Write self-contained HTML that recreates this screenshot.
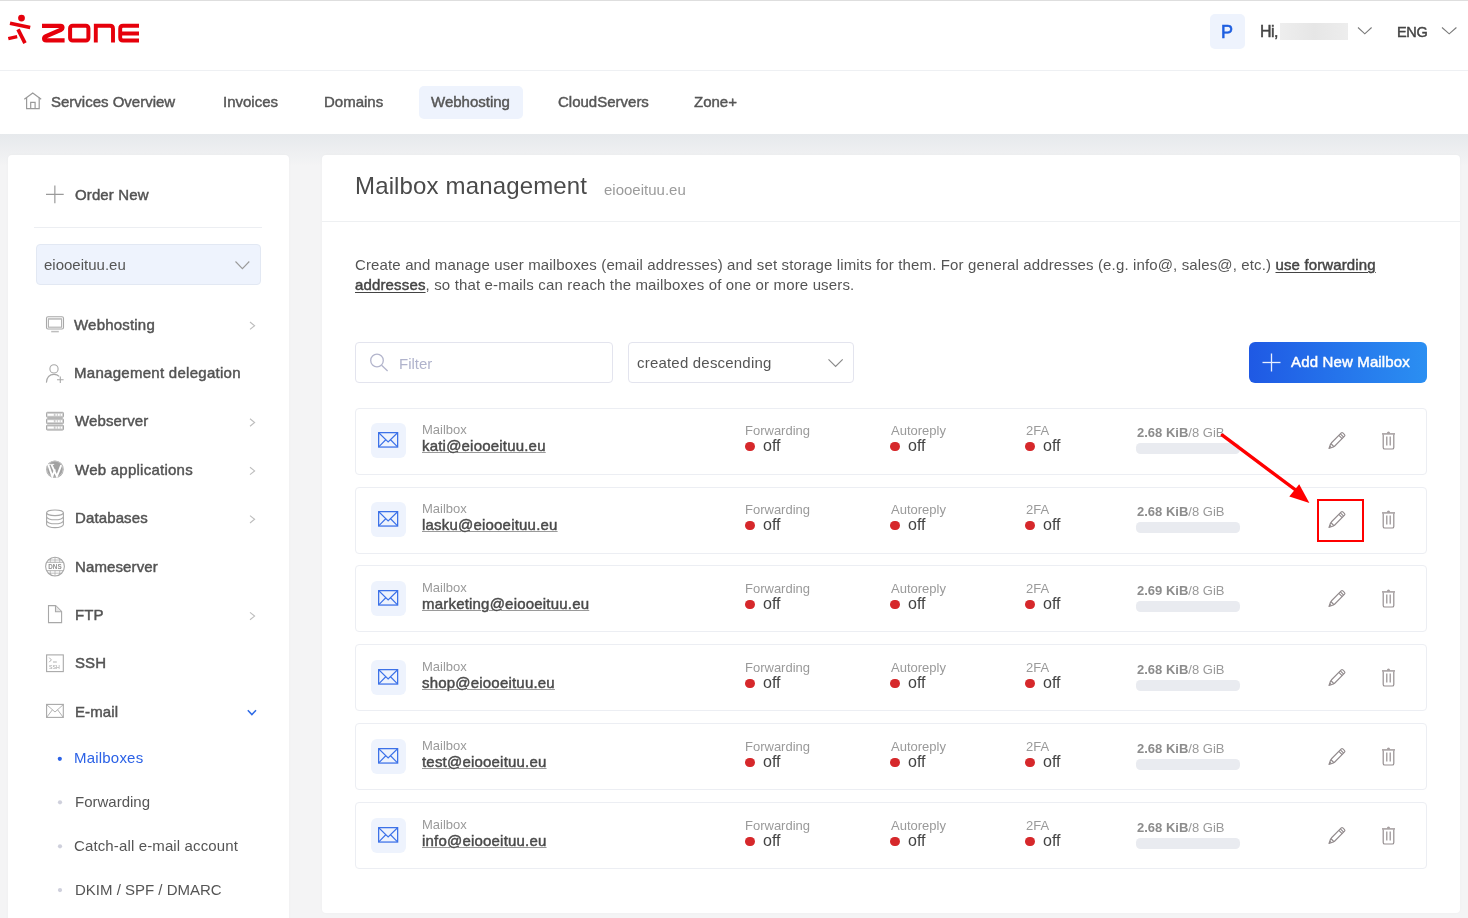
<!DOCTYPE html>
<html><head><meta charset="utf-8">
<style>
*{box-sizing:border-box;margin:0;padding:0}
html,body{width:1468px;height:918px;overflow:hidden}
body{position:relative;background:#f4f4f5;font-family:"Liberation Sans",sans-serif;color:#4a4a4a}
.a{position:absolute}
.t{position:absolute;white-space:nowrap;line-height:1;will-change:transform}
.m{-webkit-text-stroke:0.45px currentColor}
svg{position:absolute;overflow:visible}
#topline{left:0;top:0;width:1468px;height:1px;background:#dedede}
#header{left:0;top:1px;width:1468px;height:69px;background:#fff}
#hline{left:0;top:70px;width:1468px;height:1px;background:#eef0f3}
#nav{left:0;top:71px;width:1468px;height:63px;background:#fff}
#shadow{left:0;top:134px;width:1468px;height:32px;background:linear-gradient(#e6e9ec,#f4f4f5)}
#side{left:8px;top:155px;width:281px;height:800px;background:#fff;border-radius:4px;box-shadow:0 0 3px rgba(0,0,0,0.03)}
#main{left:322px;top:155px;width:1138px;height:758px;background:#fff;border-radius:4px;box-shadow:0 0 3px rgba(0,0,0,0.03)}
.nav{font-size:15px;color:#565656}
.side{font-size:15px;color:#535353;letter-spacing:0.12px}
.sub{font-size:15px;color:#555}
.row{position:absolute;left:355px;width:1072px;height:67px;border:1px solid #eceef3;border-radius:4px;background:#fff}
.in{position:absolute;left:0;width:100%;height:100%}
.ibox{position:absolute;left:15px;top:15px;width:35px;height:35px;border-radius:6px;background:#eef3fd}
.lbl{font-size:13px;color:#9a9a9a}
.em{font-size:15px;color:#4a4a4a;letter-spacing:0.2px;text-decoration:underline;text-decoration-color:#9a9a9a;text-decoration-thickness:1.3px;text-underline-offset:1.2px}
.off{font-size:16px;color:#444}
.dot{position:absolute;width:9.5px;height:9.5px;border-radius:50%;background:#d6282b}
.bar{position:absolute;left:780px;top:35px;width:104px;height:12px;border-radius:4.5px;background:#e9ebf0}
.st{font-size:13px;color:#999}
.st b{color:#8c8c8c}
</style></head>
<body>
<div id="topline" class="a"></div>
<div id="header" class="a"></div>
<div id="hline" class="a"></div>
<div id="nav" class="a"></div>
<div id="shadow" class="a"></div>
<div id="side" class="a"></div>
<div id="main" class="a"></div>

<!-- LOGO -->
<svg width="150" height="60" style="left:0;top:0" viewBox="0 0 150 60">
 <g fill="#e6000b"><circle cx="21.5" cy="18.1" r="3.4"/></g>
 <g stroke="#e6000b" fill="none">
  <line x1="10" y1="23.3" x2="30.2" y2="27.4" stroke-width="3.6"/>
  <line x1="18" y1="29.3" x2="25" y2="43.2" stroke-width="3.7"/>
  <line x1="8.3" y1="38.6" x2="17.2" y2="36.6" stroke-width="3.4"/>
  <path d="M42,25.85 L60.5,25.85 Q62.4,25.85 62.4,27.8 Q62.4,29.2 61,29.8 L46,36.2 Q44.2,37 44.2,38.5 Q44.2,40.4 46.2,40.4 L64.6,40.4" stroke-width="4.4"/>
  <rect x="70.1" y="25.7" width="18.3" height="14.8" rx="2.5" stroke-width="4"/>
  <path d="M95.8,42.5 V25.7 H110 Q113,25.7 113,28.7 V42.5" stroke-width="3.9"/>
  <path d="M139,25.7 H123 Q120.2,25.7 120.2,28.7 V37.5 Q120.2,40.5 123,40.5 H139 M120.2,33.55 H139" stroke-width="3.9"/>
 </g>
</svg>

<!-- HEADER RIGHT -->
<div class="a" style="left:1210px;top:14px;width:35px;height:35px;border-radius:5px;background:#eef3fd"></div>
<div class="t" style="left:1221px;top:23.3px;font-size:18px;color:#1f5fe0;-webkit-text-stroke:0.6px #1f5fe0">P</div>
<div class="t m" style="left:1260px;top:24.4px;font-size:16px;color:#444;letter-spacing:-0.6px">Hi,</div>
<div class="a" style="left:1280px;top:23px;width:68px;height:17px;background:linear-gradient(90deg,#eeeeee,#e6e6e6 50%,#ededed);filter:blur(0.7px)"></div>
<svg width="20" height="10" style="left:0;top:0"><polyline points="1358,27.5 1364.8,33.8 1371.6,27.5" fill="none" stroke="#7a7a7a" stroke-width="1.1"/></svg>
<div class="t m" style="left:1397px;top:24.5px;font-size:14.5px;color:#444;letter-spacing:-0.3px">ENG</div>
<svg width="20" height="10" style="left:0;top:0"><polyline points="1442,27.5 1449.2,33.8 1456.4,27.5" fill="none" stroke="#7a7a7a" stroke-width="1.1"/></svg>

<!-- NAV -->
<svg width="20" height="20" style="left:0;top:0"><g fill="none" stroke="#9a9a9a" stroke-width="1.2"><path d="M24.3,99.3 L32.75,92.9 L41.2,99.3"/><path d="M26.6,97.6 V108.7 H39.2 V97.6"/><path d="M30.7,108.7 V102.4 H35.1 V108.7"/></g></svg>
<div class="a" style="left:419px;top:86px;width:104px;height:33px;border-radius:5px;background:#eef3fd"></div>
<div class="t nav m" style="left:51px;top:94px">Services Overview</div>
<div class="t nav m" style="left:222.5px;top:94px">Invoices</div>
<div class="t nav m" style="left:324.4px;top:94px">Domains</div>
<div class="t nav m" style="left:430.7px;top:94px">Webhosting</div>
<div class="t nav m" style="left:557.6px;top:94px">CloudServers</div>
<div class="t nav m" style="left:694.2px;top:94px">Zone+</div>


<!-- SIDEBAR -->
<svg width="300" height="918" style="left:0;top:0" viewBox="0 0 300 918">
 <g fill="none" stroke="#9a9a9a" stroke-width="1.2">
  <path d="M46,194.4 H63.7 M54.85,185.6 V203.2"/>
 </g>
 <line x1="34" y1="227.5" x2="262" y2="227.5" stroke="#eceef2" stroke-width="1"/>
 <g fill="none" stroke="#a8a8a8" stroke-width="1.1">
  <!-- monitor -->
  <rect x="46.5" y="316.8" width="17" height="12.2" rx="1.5"/>
  <rect x="48.4" y="318.9" width="13.2" height="8.3" fill="#fff" stroke="#b0b0b0"/><line x1="48.4" y1="318.9" x2="61.6" y2="318.9" stroke="#c4c4c4" stroke-width="1.4"/>
  <line x1="51.2" y1="331.6" x2="58.8" y2="331.6" stroke="#bdbdbd" stroke-width="1.5"/>
  <!-- user plus -->
  <circle cx="54" cy="368.9" r="4.1"/>
  <path d="M46.4,382.6 C46.8,377 50,374.4 54,374.4 C56.2,374.4 58,375.2 59.2,376.4"/>
  <path d="M57,379.8 H63.6 M60.3,376.6 V383"/>
  <!-- server -->
 </g>
 <g>
  <rect x="46.5" y="412.3" width="17" height="5" rx="0.9" fill="#cbcbcb" stroke="#a9a9a9" stroke-width="1"/>
  <rect x="47.5" y="413.8" width="6.3" height="2" fill="#fff"/>
  <rect x="55.5" y="413.8" width="1.3" height="2" fill="#fff"/>
  <rect x="57.8" y="413.8" width="1.9" height="2" fill="#fff"/>
  <rect x="60.7" y="413.8" width="1.5" height="2" fill="#fff"/>
  <rect x="46.5" y="418.7" width="17" height="5" rx="0.9" fill="#cbcbcb" stroke="#a9a9a9" stroke-width="1"/>
  <rect x="47.5" y="420.2" width="6.3" height="2" fill="#fff"/>
  <rect x="55.5" y="420.2" width="1.3" height="2" fill="#fff"/>
  <rect x="57.8" y="420.2" width="1.9" height="2" fill="#fff"/>
  <rect x="60.7" y="420.2" width="1.5" height="2" fill="#fff"/>
  <rect x="46.5" y="425.1" width="17" height="5" rx="0.9" fill="#cbcbcb" stroke="#a9a9a9" stroke-width="1"/>
  <rect x="47.5" y="426.6" width="6.3" height="2" fill="#fff"/>
  <rect x="55.5" y="426.6" width="1.3" height="2" fill="#fff"/>
  <rect x="57.8" y="426.6" width="1.9" height="2" fill="#fff"/>
  <rect x="60.7" y="426.6" width="1.5" height="2" fill="#fff"/>
 </g>
 <!-- wordpress -->
 <circle cx="54.9" cy="469.2" r="8.8" fill="#a2a2a2"/>
 <circle cx="54.9" cy="469.2" r="8.1" fill="none" stroke="#d8d8d8" stroke-width="0.6"/>
 <path d="M48.3,464.8 L52.3,476.4 L55,469.4 M51.6,464.8 L56.9,476.4 L61.2,465.2" stroke="#fff" stroke-width="1.9" fill="none"/>
 <path d="M47,464.4 H50.6 M50.4,464.4 H54.2" stroke="#fff" stroke-width="0.9"/>
 <g fill="none" stroke="#a8a8a8" stroke-width="1.1">
  <!-- database -->
  <g transform="translate(0,0.6)"><ellipse cx="55" cy="512.2" rx="8.4" ry="2.8"/>
  <path d="M46.6,512.2 V524 C46.6,525.6 50.4,527 55,527 C59.6,527 63.4,525.6 63.4,524 V512.2"/>
  <path d="M46.6,516.2 C46.6,517.8 50.4,519.2 55,519.2 C59.6,519.2 63.4,517.8 63.4,516.2"/>
  <path d="M46.6,520.2 C46.6,521.8 50.4,523.2 55,523.2 C59.6,523.2 63.4,521.8 63.4,520.2"/></g>
  <!-- dns -->
  <circle cx="55" cy="566.6" r="9.4"/>
  <path d="M46.3,562.3 H63.7 M46.3,570.7 H63.7" stroke-width="0.9"/>
  <path d="M55,557.2 V562.3 M51.2,558 Q49.8,560 50.3,562.3 M58.8,558 Q60.2,560 59.7,562.3 M48.2,560 H61.8 M55,570.7 V576 M51.2,575.2 Q49.8,573 50.3,570.7 M58.8,575.2 Q60.2,573 59.7,570.7 M48.2,573.2 H61.8" stroke-width="0.7"/>
  <!-- file -->
  <path d="M48.5,605.6 H55.6 L61.6,611.6 V622.6 H48.5 Z"/>
  <path d="M55.5,605.8 V611.7 H61.4" fill="#e6e6e6"/>
  <!-- ssh -->
  <rect x="46.6" y="654.9" width="16.7" height="16.7"/>
  <path d="M49.2,657.6 L51.4,659.9 L49.2,662.2 M53,662 H56.8" stroke-width="0.9"/>
  <!-- mail -->
  <rect x="46.6" y="704.4" width="16.7" height="13"/>
  <path d="M46.6,704.6 L55,712 L63.3,704.6 M46.6,717.4 L52.4,709.8 M63.3,717.4 L57.6,709.8" stroke-width="0.9"/>
 </g>
 <text x="48.3" y="569.1" font-family="Liberation Sans" font-weight="bold" font-size="6.6" fill="#8e8e8e" textLength="13.3" lengthAdjust="spacingAndGlyphs">DNS</text>
 <text x="49.1" y="669.4" font-family="Liberation Sans" font-size="5.8" fill="#a0a0a0" textLength="10.7" lengthAdjust="spacingAndGlyphs">SSH</text>
 <g fill="none" stroke="#bdbdbd" stroke-width="1.1">
  <polyline points="250,322 254.6,325.7 250,329.4"/>
  <polyline points="250,418.8 254.6,422.5 250,426.2"/>
  <polyline points="250,467.2 254.6,470.9 250,474.6"/>
  <polyline points="250,515.6 254.6,519.3 250,523"/>
  <polyline points="250,612.4 254.6,616.1 250,619.8"/>
 </g>
 <polyline points="247.8,710.2 251.9,714.6 256,710.2" fill="none" stroke="#2f6be6" stroke-width="1.5"/>
 <circle cx="59.8" cy="758.8" r="2.1" fill="#2c62e6"/>
 <circle cx="60" cy="802.3" r="2.1" fill="#cfd0dc"/>
 <circle cx="60" cy="846.3" r="2.1" fill="#cfd0dc"/>
 <circle cx="60" cy="890.1" r="2.1" fill="#cfd0dc"/>
</svg>
<div class="a" style="left:36px;top:244px;width:225px;height:41px;border-radius:4px;background:#eef3fd;border:1px solid #e2e8f3"></div>
<svg width="20" height="10" style="left:0;top:0"><polyline points="235.5,261.5 242.4,268.6 249.3,261.5" fill="none" stroke="#9a9a9a" stroke-width="1.1"/></svg>
<div class="t side m" style="left:74.6px;top:187px">Order New</div>
<div class="t" style="left:43.8px;top:257px;font-size:15px;color:#555">eiooeituu.eu</div>
<div class="t side m" style="left:74px;top:316.8px;letter-spacing:0.2px">Webhosting</div>
<div class="t side m" style="left:74px;top:365.3px;letter-spacing:0.28px">Management delegation</div>
<div class="t side m" style="left:74.5px;top:412.9px">Webserver</div>
<div class="t side m" style="left:74.5px;top:461.9px;letter-spacing:0.25px">Web applications</div>
<div class="t side m" style="left:74.5px;top:510.3px">Databases</div>
<div class="t side m" style="left:74.5px;top:558.7px">Nameserver</div>
<div class="t side m" style="left:74.5px;top:607.1px">FTP</div>
<div class="t side m" style="left:74.5px;top:654.6px">SSH</div>
<div class="t side m" style="left:74.5px;top:704.3px">E-mail</div>
<div class="t sub" style="left:74.3px;top:749.9px;color:#2c62e6;letter-spacing:0.2px">Mailboxes</div>
<div class="t sub" style="left:74.5px;top:793.9px">Forwarding</div>
<div class="t sub" style="left:74px;top:838.1px;letter-spacing:0.13px">Catch-all e-mail account</div>
<div class="t sub" style="left:74.5px;top:882px">DKIM / SPF / DMARC</div>


<!-- MAIN -->
<div class="a" style="left:322px;top:221px;width:1138px;height:1px;background:#eef0f2"></div>
<div class="t" style="left:354.5px;top:174.1px;font-size:24px;color:#4a4a4a;letter-spacing:0.15px">Mailbox management</div>
<div class="t" style="left:603.9px;top:181.7px;font-size:15px;color:#9b9b9b">eiooeituu.eu</div>
<div class="t" style="left:355px;top:256.8px;font-size:15px;color:#555;letter-spacing:0.135px">Create and manage user mailboxes (email addresses) and set storage limits for them. For general addresses (e.g. info@, sales@, etc.) <span class="m" style="text-decoration:underline;text-decoration-thickness:1px;text-underline-offset:2px;color:#444">use forwarding</span></div>
<div class="t" style="left:355px;top:277.3px;font-size:15px;color:#555;letter-spacing:0.15px"><span class="m" style="text-decoration:underline;text-decoration-thickness:1px;text-underline-offset:2px;color:#444">addresses</span>, so that e-mails can reach the mailboxes of one or more users.</div>

<div class="a" style="left:355px;top:342px;width:258px;height:41px;border:1px solid #e3e4ee;border-radius:4px;background:#fff"></div>
<svg width="20" height="20" style="left:0;top:0"><g fill="none" stroke="#b3b5cc" stroke-width="1.3"><circle cx="377" cy="360.5" r="6.3"/><line x1="381.6" y1="365.2" x2="387.6" y2="371"/></g></svg>
<div class="t" style="left:399.4px;top:355.7px;font-size:15px;color:#b0b3cc">Filter</div>

<div class="a" style="left:628px;top:342px;width:226px;height:41px;border:1px solid #e3e4ee;border-radius:4px;background:#fff"></div>
<div class="t" style="left:636.5px;top:355.3px;font-size:15px;color:#555;letter-spacing:0.2px">created descending</div>
<svg width="20" height="10" style="left:0;top:0"><polyline points="828.5,359.4 835.6,366.4 842.7,359.4" fill="none" stroke="#8a8a8a" stroke-width="1.2"/></svg>

<div class="a" style="left:1249px;top:342px;width:178px;height:41px;border-radius:6px;background:linear-gradient(90deg,#1f59e4,#2b8ff2)"></div>
<svg width="20" height="20" style="left:0;top:0"><g fill="none" stroke="#e8f0ff" stroke-width="1.3"><line x1="1262.5" y1="362.5" x2="1280.5" y2="362.5"/><line x1="1271.5" y1="353.5" x2="1271.5" y2="371.5"/></g></svg>
<div class="t m" style="left:1290.5px;top:353.6px;font-size:15px;color:#fff;letter-spacing:0.15px">Add New Mailbox</div>
<div class="row" style="top:408px"><div class="in" style="top:-1px">
 <div class="ibox"></div>
 <svg width="21" height="16" style="left:22.3px;top:24px"><g fill="none" stroke="#3a70e8" stroke-width="1.25"><rect x="0.65" y="0.65" width="19" height="14.4"/><path d="M1,1 L10.15,10 L19.3,1 M1,14.7 L7.5,8 M19.3,14.7 L12.8,8" stroke-width="1.1"/></g></svg>
 <div class="t lbl" style="left:65.5px;top:14.8px">Mailbox</div>
 <div class="t em m" style="left:65.5px;top:30.3px">kati@eiooeituu.eu</div>
 <div class="t lbl" style="left:389px;top:15.7px">Forwarding</div>
 <div class="dot" style="left:389px;top:33.9px"></div>
 <div class="t off" style="left:406.8px;top:30.2px">off</div>
 <div class="t lbl" style="left:534.6px;top:15.7px">Autoreply</div>
 <div class="dot" style="left:534.2px;top:33.9px"></div>
 <div class="t off" style="left:552.2px;top:30.2px">off</div>
 <div class="t lbl" style="left:669.6px;top:15.7px">2FA</div>
 <div class="dot" style="left:669px;top:33.9px"></div>
 <div class="t off" style="left:687px;top:30.2px">off</div>
 <div class="t st" style="left:780.5px;top:17.7px"><b>2.68 KiB</b>/8 GiB</div>
 <div class="bar" style="left:780px;top:34.9px;width:104px;height:11.6px"></div>
 <svg width="19" height="19" style="left:972px;top:22.6px"><g transform="translate(1,17.5) rotate(-45)" fill="none" stroke="#928b8d" stroke-width="1.15" stroke-linejoin="round"><path d="M4.77,-2.3 L0,0 L4.77,2.3"/><rect x="4.77" y="-2.3" width="16" height="4.6" rx="1.1"/><path d="M16.3,-2.3 V2.3 M18.4,-2.3 V2.3 M2.2,-1 V1" /></g></svg>
 <svg width="13" height="19" style="left:1026px;top:22.9px"><path d="M4.9,2.4 Q4.9,0.6 6.5,0.6 Q8.1,0.6 8.1,2.4 Z" fill="#a39c9e"/><path d="M0,2.9 H13" stroke="#a39c9e" stroke-width="1.5"/><path d="M1.2,3.6 V16.4 Q1.2,18 2.8,18 H10.2 Q11.8,18 11.8,16.4 V3.6 M4.8,5.5 V14.5 M8.2,5.5 V14.5" fill="none" stroke="#958e90" stroke-width="1.2"/></svg>
</div></div>
<div class="row" style="top:487px"><div class="in" style="top:-1px">
 <div class="ibox"></div>
 <svg width="21" height="16" style="left:22.3px;top:24px"><g fill="none" stroke="#3a70e8" stroke-width="1.25"><rect x="0.65" y="0.65" width="19" height="14.4"/><path d="M1,1 L10.15,10 L19.3,1 M1,14.7 L7.5,8 M19.3,14.7 L12.8,8" stroke-width="1.1"/></g></svg>
 <div class="t lbl" style="left:65.5px;top:14.8px">Mailbox</div>
 <div class="t em m" style="left:65.5px;top:30.3px">lasku@eiooeituu.eu</div>
 <div class="t lbl" style="left:389px;top:15.7px">Forwarding</div>
 <div class="dot" style="left:389px;top:33.9px"></div>
 <div class="t off" style="left:406.8px;top:30.2px">off</div>
 <div class="t lbl" style="left:534.6px;top:15.7px">Autoreply</div>
 <div class="dot" style="left:534.2px;top:33.9px"></div>
 <div class="t off" style="left:552.2px;top:30.2px">off</div>
 <div class="t lbl" style="left:669.6px;top:15.7px">2FA</div>
 <div class="dot" style="left:669px;top:33.9px"></div>
 <div class="t off" style="left:687px;top:30.2px">off</div>
 <div class="t st" style="left:780.5px;top:17.7px"><b>2.68 KiB</b>/8 GiB</div>
 <div class="bar" style="left:780px;top:34.9px;width:104px;height:11.6px"></div>
 <svg width="19" height="19" style="left:972px;top:22.6px"><g transform="translate(1,17.5) rotate(-45)" fill="none" stroke="#928b8d" stroke-width="1.15" stroke-linejoin="round"><path d="M4.77,-2.3 L0,0 L4.77,2.3"/><rect x="4.77" y="-2.3" width="16" height="4.6" rx="1.1"/><path d="M16.3,-2.3 V2.3 M18.4,-2.3 V2.3 M2.2,-1 V1" /></g></svg>
 <svg width="13" height="19" style="left:1026px;top:22.9px"><path d="M4.9,2.4 Q4.9,0.6 6.5,0.6 Q8.1,0.6 8.1,2.4 Z" fill="#a39c9e"/><path d="M0,2.9 H13" stroke="#a39c9e" stroke-width="1.5"/><path d="M1.2,3.6 V16.4 Q1.2,18 2.8,18 H10.2 Q11.8,18 11.8,16.4 V3.6 M4.8,5.5 V14.5 M8.2,5.5 V14.5" fill="none" stroke="#958e90" stroke-width="1.2"/></svg>
</div></div>
<div class="row" style="top:565px"><div class="in" style="top:0px">
 <div class="ibox"></div>
 <svg width="21" height="16" style="left:22.3px;top:24px"><g fill="none" stroke="#3a70e8" stroke-width="1.25"><rect x="0.65" y="0.65" width="19" height="14.4"/><path d="M1,1 L10.15,10 L19.3,1 M1,14.7 L7.5,8 M19.3,14.7 L12.8,8" stroke-width="1.1"/></g></svg>
 <div class="t lbl" style="left:65.5px;top:14.8px">Mailbox</div>
 <div class="t em m" style="left:65.5px;top:30.3px">marketing@eiooeituu.eu</div>
 <div class="t lbl" style="left:389px;top:15.7px">Forwarding</div>
 <div class="dot" style="left:389px;top:33.9px"></div>
 <div class="t off" style="left:406.8px;top:30.2px">off</div>
 <div class="t lbl" style="left:534.6px;top:15.7px">Autoreply</div>
 <div class="dot" style="left:534.2px;top:33.9px"></div>
 <div class="t off" style="left:552.2px;top:30.2px">off</div>
 <div class="t lbl" style="left:669.6px;top:15.7px">2FA</div>
 <div class="dot" style="left:669px;top:33.9px"></div>
 <div class="t off" style="left:687px;top:30.2px">off</div>
 <div class="t st" style="left:780.5px;top:17.7px"><b>2.69 KiB</b>/8 GiB</div>
 <div class="bar" style="left:780px;top:34.9px;width:104px;height:11.6px"></div>
 <svg width="19" height="19" style="left:972px;top:22.6px"><g transform="translate(1,17.5) rotate(-45)" fill="none" stroke="#928b8d" stroke-width="1.15" stroke-linejoin="round"><path d="M4.77,-2.3 L0,0 L4.77,2.3"/><rect x="4.77" y="-2.3" width="16" height="4.6" rx="1.1"/><path d="M16.3,-2.3 V2.3 M18.4,-2.3 V2.3 M2.2,-1 V1" /></g></svg>
 <svg width="13" height="19" style="left:1026px;top:22.9px"><path d="M4.9,2.4 Q4.9,0.6 6.5,0.6 Q8.1,0.6 8.1,2.4 Z" fill="#a39c9e"/><path d="M0,2.9 H13" stroke="#a39c9e" stroke-width="1.5"/><path d="M1.2,3.6 V16.4 Q1.2,18 2.8,18 H10.2 Q11.8,18 11.8,16.4 V3.6 M4.8,5.5 V14.5 M8.2,5.5 V14.5" fill="none" stroke="#958e90" stroke-width="1.2"/></svg>
</div></div>
<div class="row" style="top:644px"><div class="in" style="top:0px">
 <div class="ibox"></div>
 <svg width="21" height="16" style="left:22.3px;top:24px"><g fill="none" stroke="#3a70e8" stroke-width="1.25"><rect x="0.65" y="0.65" width="19" height="14.4"/><path d="M1,1 L10.15,10 L19.3,1 M1,14.7 L7.5,8 M19.3,14.7 L12.8,8" stroke-width="1.1"/></g></svg>
 <div class="t lbl" style="left:65.5px;top:14.8px">Mailbox</div>
 <div class="t em m" style="left:65.5px;top:30.3px">shop@eiooeituu.eu</div>
 <div class="t lbl" style="left:389px;top:15.7px">Forwarding</div>
 <div class="dot" style="left:389px;top:33.9px"></div>
 <div class="t off" style="left:406.8px;top:30.2px">off</div>
 <div class="t lbl" style="left:534.6px;top:15.7px">Autoreply</div>
 <div class="dot" style="left:534.2px;top:33.9px"></div>
 <div class="t off" style="left:552.2px;top:30.2px">off</div>
 <div class="t lbl" style="left:669.6px;top:15.7px">2FA</div>
 <div class="dot" style="left:669px;top:33.9px"></div>
 <div class="t off" style="left:687px;top:30.2px">off</div>
 <div class="t st" style="left:780.5px;top:17.7px"><b>2.68 KiB</b>/8 GiB</div>
 <div class="bar" style="left:780px;top:34.9px;width:104px;height:11.6px"></div>
 <svg width="19" height="19" style="left:972px;top:22.6px"><g transform="translate(1,17.5) rotate(-45)" fill="none" stroke="#928b8d" stroke-width="1.15" stroke-linejoin="round"><path d="M4.77,-2.3 L0,0 L4.77,2.3"/><rect x="4.77" y="-2.3" width="16" height="4.6" rx="1.1"/><path d="M16.3,-2.3 V2.3 M18.4,-2.3 V2.3 M2.2,-1 V1" /></g></svg>
 <svg width="13" height="19" style="left:1026px;top:22.9px"><path d="M4.9,2.4 Q4.9,0.6 6.5,0.6 Q8.1,0.6 8.1,2.4 Z" fill="#a39c9e"/><path d="M0,2.9 H13" stroke="#a39c9e" stroke-width="1.5"/><path d="M1.2,3.6 V16.4 Q1.2,18 2.8,18 H10.2 Q11.8,18 11.8,16.4 V3.6 M4.8,5.5 V14.5 M8.2,5.5 V14.5" fill="none" stroke="#958e90" stroke-width="1.2"/></svg>
</div></div>
<div class="row" style="top:723px"><div class="in" style="top:0px">
 <div class="ibox"></div>
 <svg width="21" height="16" style="left:22.3px;top:24px"><g fill="none" stroke="#3a70e8" stroke-width="1.25"><rect x="0.65" y="0.65" width="19" height="14.4"/><path d="M1,1 L10.15,10 L19.3,1 M1,14.7 L7.5,8 M19.3,14.7 L12.8,8" stroke-width="1.1"/></g></svg>
 <div class="t lbl" style="left:65.5px;top:14.8px">Mailbox</div>
 <div class="t em m" style="left:65.5px;top:30.3px">test@eiooeituu.eu</div>
 <div class="t lbl" style="left:389px;top:15.7px">Forwarding</div>
 <div class="dot" style="left:389px;top:33.9px"></div>
 <div class="t off" style="left:406.8px;top:30.2px">off</div>
 <div class="t lbl" style="left:534.6px;top:15.7px">Autoreply</div>
 <div class="dot" style="left:534.2px;top:33.9px"></div>
 <div class="t off" style="left:552.2px;top:30.2px">off</div>
 <div class="t lbl" style="left:669.6px;top:15.7px">2FA</div>
 <div class="dot" style="left:669px;top:33.9px"></div>
 <div class="t off" style="left:687px;top:30.2px">off</div>
 <div class="t st" style="left:780.5px;top:17.7px"><b>2.68 KiB</b>/8 GiB</div>
 <div class="bar" style="left:780px;top:34.9px;width:104px;height:11.6px"></div>
 <svg width="19" height="19" style="left:972px;top:22.6px"><g transform="translate(1,17.5) rotate(-45)" fill="none" stroke="#928b8d" stroke-width="1.15" stroke-linejoin="round"><path d="M4.77,-2.3 L0,0 L4.77,2.3"/><rect x="4.77" y="-2.3" width="16" height="4.6" rx="1.1"/><path d="M16.3,-2.3 V2.3 M18.4,-2.3 V2.3 M2.2,-1 V1" /></g></svg>
 <svg width="13" height="19" style="left:1026px;top:22.9px"><path d="M4.9,2.4 Q4.9,0.6 6.5,0.6 Q8.1,0.6 8.1,2.4 Z" fill="#a39c9e"/><path d="M0,2.9 H13" stroke="#a39c9e" stroke-width="1.5"/><path d="M1.2,3.6 V16.4 Q1.2,18 2.8,18 H10.2 Q11.8,18 11.8,16.4 V3.6 M4.8,5.5 V14.5 M8.2,5.5 V14.5" fill="none" stroke="#958e90" stroke-width="1.2"/></svg>
</div></div>
<div class="row" style="top:802px"><div class="in" style="top:0px">
 <div class="ibox"></div>
 <svg width="21" height="16" style="left:22.3px;top:24px"><g fill="none" stroke="#3a70e8" stroke-width="1.25"><rect x="0.65" y="0.65" width="19" height="14.4"/><path d="M1,1 L10.15,10 L19.3,1 M1,14.7 L7.5,8 M19.3,14.7 L12.8,8" stroke-width="1.1"/></g></svg>
 <div class="t lbl" style="left:65.5px;top:14.8px">Mailbox</div>
 <div class="t em m" style="left:65.5px;top:30.3px">info@eiooeituu.eu</div>
 <div class="t lbl" style="left:389px;top:15.7px">Forwarding</div>
 <div class="dot" style="left:389px;top:33.9px"></div>
 <div class="t off" style="left:406.8px;top:30.2px">off</div>
 <div class="t lbl" style="left:534.6px;top:15.7px">Autoreply</div>
 <div class="dot" style="left:534.2px;top:33.9px"></div>
 <div class="t off" style="left:552.2px;top:30.2px">off</div>
 <div class="t lbl" style="left:669.6px;top:15.7px">2FA</div>
 <div class="dot" style="left:669px;top:33.9px"></div>
 <div class="t off" style="left:687px;top:30.2px">off</div>
 <div class="t st" style="left:780.5px;top:17.7px"><b>2.68 KiB</b>/8 GiB</div>
 <div class="bar" style="left:780px;top:34.9px;width:104px;height:11.6px"></div>
 <svg width="19" height="19" style="left:972px;top:22.6px"><g transform="translate(1,17.5) rotate(-45)" fill="none" stroke="#928b8d" stroke-width="1.15" stroke-linejoin="round"><path d="M4.77,-2.3 L0,0 L4.77,2.3"/><rect x="4.77" y="-2.3" width="16" height="4.6" rx="1.1"/><path d="M16.3,-2.3 V2.3 M18.4,-2.3 V2.3 M2.2,-1 V1" /></g></svg>
 <svg width="13" height="19" style="left:1026px;top:22.9px"><path d="M4.9,2.4 Q4.9,0.6 6.5,0.6 Q8.1,0.6 8.1,2.4 Z" fill="#a39c9e"/><path d="M0,2.9 H13" stroke="#a39c9e" stroke-width="1.5"/><path d="M1.2,3.6 V16.4 Q1.2,18 2.8,18 H10.2 Q11.8,18 11.8,16.4 V3.6 M4.8,5.5 V14.5 M8.2,5.5 V14.5" fill="none" stroke="#958e90" stroke-width="1.2"/></svg>
</div></div>

<!-- annotation -->
<svg width="1468" height="918" style="left:0;top:0">
 <line x1="1222.3" y1="435.2" x2="1297" y2="491" stroke="#ff0000" stroke-width="3.4" stroke-linecap="round"/>
 <polygon points="1309.4,502.9 1299.2,484.3 1289.3,496.5" fill="#ff0000"/>
 <rect x="1318" y="500" width="45" height="41" fill="none" stroke="#ff0000" stroke-width="2"/>
</svg>

</body></html>
